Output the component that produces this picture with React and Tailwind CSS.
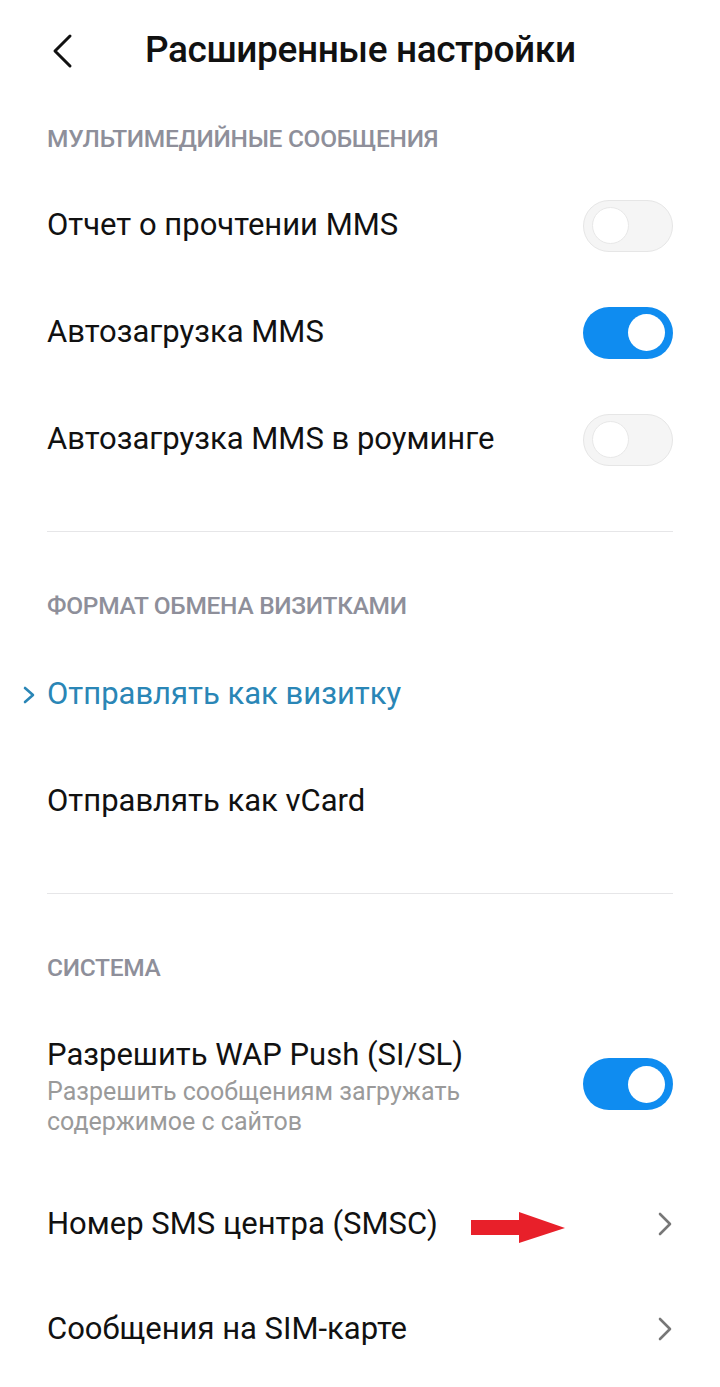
import React from "react";

function Toggle({ on }) {
  return on ? (
    <div className="w-[90px] h-[52px] rounded-full bg-[#0f8cf0] flex items-center justify-end pr-[8px] shrink-0">
      <div className="w-[37px] h-[37px] rounded-full bg-white" />
    </div>
  ) : (
    <div className="w-[90px] h-[52px] rounded-full bg-[#f5f5f5] border border-[#e6e6e6] flex items-center pl-[8px] shrink-0">
      <div className="w-[37px] h-[37px] rounded-full bg-white border border-[#e8e8e8]" />
    </div>
  );
}

function Chevron() {
  return (
    <svg width="16" height="26" viewBox="0 0 16 26" className="shrink-0">
      <path d="M3 3 L13 13 L3 23" fill="none" stroke="#777" strokeWidth="2.6" strokeLinecap="round" strokeLinejoin="round" />
    </svg>
  );
}

function Header({ children, className = "" }) {
  return (
    <div className={`h-[70px] flex items-center px-[47px] text-[24.5px] text-[#8e8f9a] font-medium tracking-[-0.3px] ${className}`}>
      {children}
    </div>
  );
}

function Row({ title, right }) {
  return (
    <div className="h-[107px] flex items-center justify-between px-[47px]">
      <span className="text-[31px] text-[#111]">{title}</span>
      {right}
    </div>
  );
}

function Divider() {
  return <div className="mx-[47px] h-px bg-[#e6e6e8]" />;
}

export default function App() {
  return (
    <div className="w-[720px] h-[1387px] bg-white overflow-hidden font-['Roboto',sans-serif]">
      {/* Top bar */}
      <div className="h-[102px] flex items-center">
        <div className="w-[145px] pl-[50px]">
          <svg width="24" height="36" viewBox="0 0 24 36">
            <path d="M20 3 L5 18 L20 33" fill="none" stroke="#111" strokeWidth="3" strokeLinecap="round" strokeLinejoin="round" />
          </svg>
        </div>
        <h1 className="text-[37px] font-medium text-[#111] tracking-[-0.4px] -mt-[2px]">Расширенные настройки</h1>
      </div>

      <Header className="pt-[4px]">МУЛЬТИМЕДИЙНЫЕ СООБЩЕНИЯ</Header>
      <Row title="Отчет о прочтении MMS" right={<Toggle on={false} />} />
      <Row title="Автозагрузка MMS" right={<Toggle on />} />
      <Row title="Автозагрузка MMS в роуминге" right={<Toggle on={false} />} />
      <div className="h-[38px]" />
      <Divider />
      <div className="h-[39px]" />

      <Header>ФОРМАТ ОБМЕНА ВИЗИТКАМИ</Header>
      <div className="h-[107px] flex items-center pl-[22px]">
        <svg width="14" height="20" viewBox="0 0 14 20" className="mr-[11px]">
          <path d="M3 3 L11 10 L3 17" fill="none" stroke="#2a86b6" strokeWidth="2.6" strokeLinecap="round" strokeLinejoin="round" />
        </svg>
        <span className="text-[31px] text-[#2a86b6]">Отправлять как визитку</span>
      </div>
      <Row title="Отправлять как vCard" />
      <div className="h-[38px]" />
      <Divider />
      <div className="h-[39px]" />

      <Header>СИСТЕМА</Header>
      <div className="h-[162px] flex items-center justify-between px-[47px]">
        <div className="flex flex-col self-start pt-[33px]">
          <span className="text-[31px] text-[#111] leading-[38px]">Разрешить WAP Push (SI/SL)</span>
          <span className="text-[25px] text-[#9a9a9a] leading-[30px] mt-[3px]">
            Разрешить сообщениям загружать
            <br />
            содержимое с сайтов
          </span>
        </div>
        <Toggle on />
      </div>
      <div className="h-[118px] flex items-center justify-between px-[47px]">
        <div className="flex items-center">
          <span className="text-[31px] text-[#111]">Номер SMS центра (SMSC)</span>
          <svg width="95" height="32" viewBox="0 0 95 32" className="ml-[33px] mt-[8px]">
            <polygon points="0,8 48,8 48,0 94,16 48,31 48,23 0,23" fill="#e8202a" />
          </svg>
        </div>
        <Chevron />
      </div>
      <div className="h-[92px] flex items-center justify-between px-[47px]">
        <span className="text-[31px] text-[#111]">Сообщения на SIM-карте</span>
        <Chevron />
      </div>
    </div>
  );
}
